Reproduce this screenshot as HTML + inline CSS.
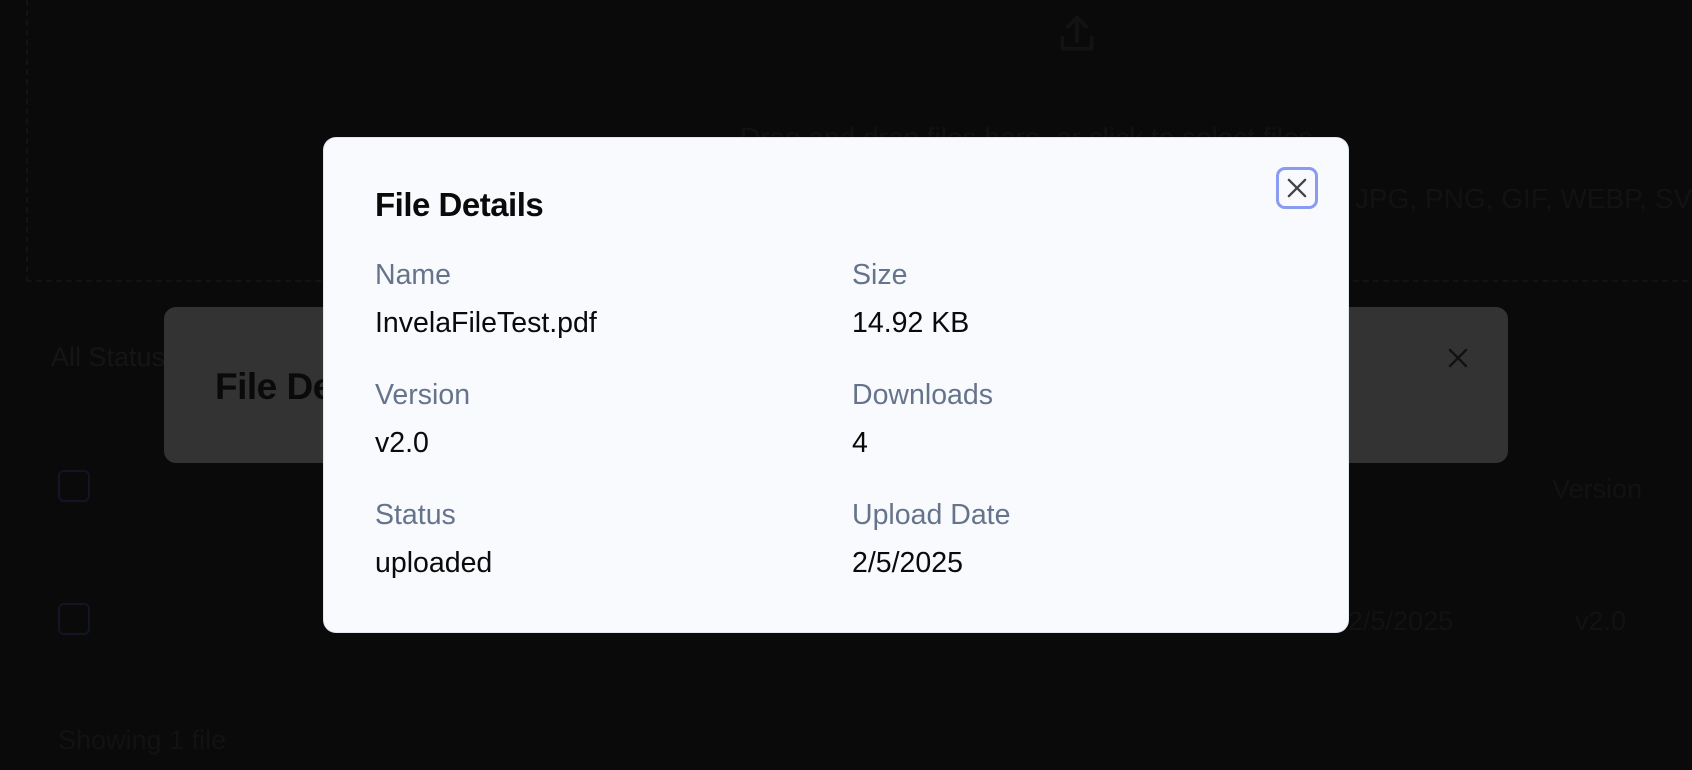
<!DOCTYPE html>
<html><head><meta charset="utf-8"><style>
html,body{margin:0;padding:0;width:1692px;height:770px;overflow:hidden;background:#0a0a0a;font-family:"Liberation Sans",Arial,sans-serif;}
.abs{position:absolute;white-space:nowrap;}
.faint{color:#121212;}
.back{position:absolute;left:164px;top:307px;width:1344px;height:156px;background:#333;border-radius:12px;}
.modal{position:absolute;left:324px;top:138px;width:1024px;height:494px;background:#f8fafe;border-radius:12px;box-shadow:0 0 0 1px #e2e6ee;}
.lbl{position:absolute;color:#66748b;font-size:28.5px;white-space:nowrap;}
.val{position:absolute;color:#0a0a0a;font-size:28.5px;white-space:nowrap;}
</style></head><body>
<div class="abs" style="left:26px;top:0;width:1700px;height:280px;border-left:2px dashed #131313;border-bottom:2px dashed #131313;"></div>
<svg class="abs" style="left:1055px;top:12px" width="44" height="44" viewBox="0 0 24 24" fill="none" stroke="#131313" stroke-width="2" stroke-linecap="round" stroke-linejoin="round"><path d="M4 14v6h16v-6M12 16V3M7 8l5-5 5 5"/></svg>
<div class="abs faint" style="left:740px;top:122px;font-size:28px;">Drag and drop files here, or click to select files</div>
<div class="abs faint" style="left:1355px;top:183px;font-size:28px;">JPG, PNG, GIF, WEBP, SVG</div>
<div class="abs" style="left:51px;top:342px;font-size:27px;color:#151515;">All Status</div>
<div class="abs faint" style="left:1552px;top:474px;font-size:27px;">Version</div>
<div class="abs faint" style="left:1348px;top:606px;font-size:27px;">2/5/2025</div>
<div class="abs faint" style="left:1575px;top:606px;font-size:27px;">v2.0</div>
<div class="abs faint" style="left:58px;top:725px;font-size:27px;">Showing 1 file</div>
<div class="abs" style="left:58px;top:470px;width:28px;height:28px;border:2px solid #121624;border-radius:6px;"></div>
<div class="abs" style="left:58px;top:603px;width:28px;height:28px;border:2px solid #121624;border-radius:6px;"></div>
<div class="back"></div>
<div class="abs" style="left:215px;top:366px;font-size:37px;font-weight:bold;color:#0a0a0a;letter-spacing:-0.5px;">File Details</div>
<svg class="abs" style="left:1446px;top:346px" width="24" height="24" viewBox="0 0 24 24" stroke="#111" stroke-width="2.4" stroke-linecap="round"><path d="M4 4l16 16M20 4L4 20"/></svg>
<div class="modal">
<div class="abs" style="left:51px;top:48px;font-size:33px;font-weight:bold;color:#0a0a0a;letter-spacing:-0.5px;">File Details</div>
<div class="abs" style="left:952px;top:29px;width:36px;height:36px;border:3px solid #8a9cf0;border-radius:9px;"></div>
<svg class="abs" style="left:959px;top:36px" width="28" height="28" viewBox="0 0 24 24" stroke="#444" stroke-width="2" stroke-linecap="round"><path d="M5 5l14 14M19 5L5 19"/></svg>
<div class="lbl" style="left:51px;top:121px;">Name</div>
<div class="val" style="left:51px;top:169px;">InvelaFileTest.pdf</div>
<div class="lbl" style="left:528px;top:121px;">Size</div>
<div class="val" style="left:528px;top:169px;">14.92 KB</div>
<div class="lbl" style="left:51px;top:241px;">Version</div>
<div class="val" style="left:51px;top:289px;">v2.0</div>
<div class="lbl" style="left:528px;top:241px;">Downloads</div>
<div class="val" style="left:528px;top:289px;">4</div>
<div class="lbl" style="left:51px;top:361px;">Status</div>
<div class="val" style="left:51px;top:409px;">uploaded</div>
<div class="lbl" style="left:528px;top:361px;">Upload Date</div>
<div class="val" style="left:528px;top:409px;">2/5/2025</div>
</div>
</body></html>
